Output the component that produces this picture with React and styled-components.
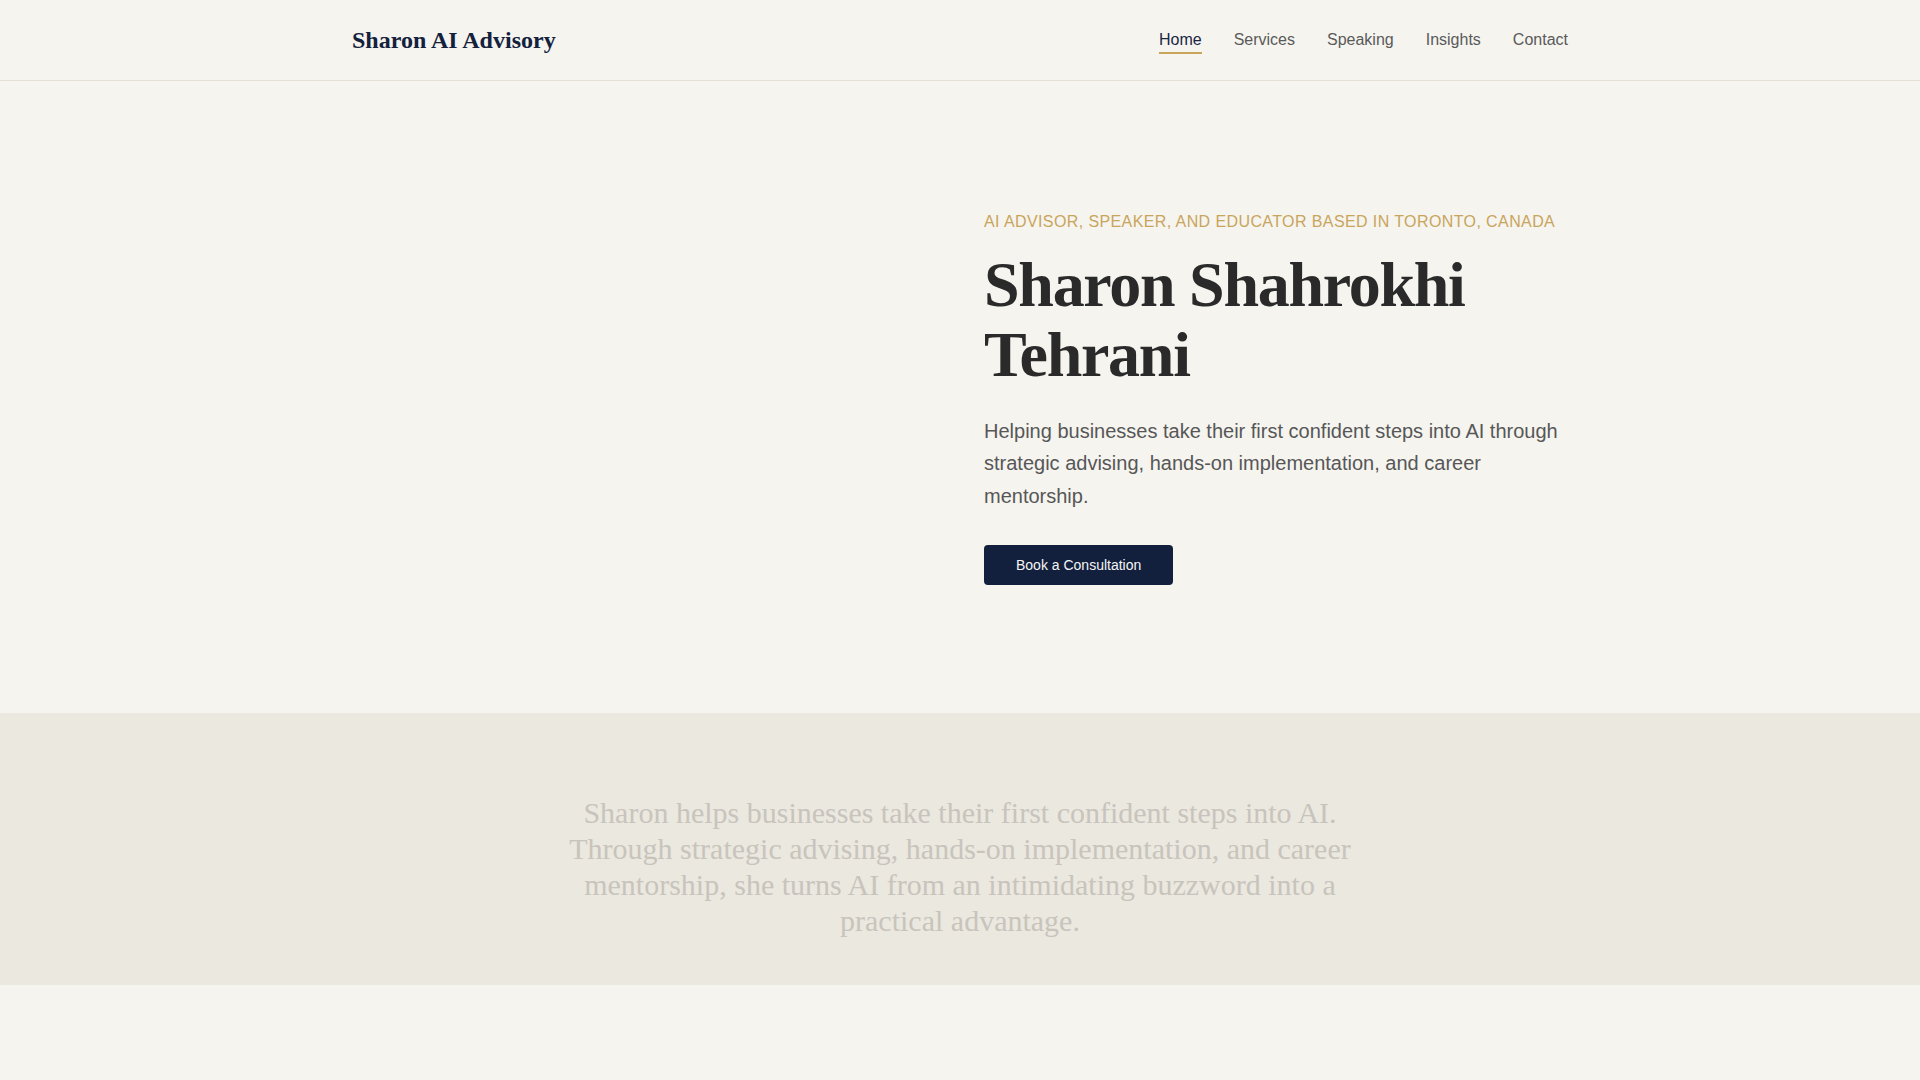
import styled, { createGlobalStyle } from "styled-components";

const GlobalStyle = createGlobalStyle`
	* { box-sizing: border-box; }
	body {
		margin: 0;
		background: #f5f4ef;
		font-family: "Liberation Sans", Arial, sans-serif;
		color: #2b2b2b;
	}
`;

const Header = styled.header`
	height: 81px;
	border-bottom: 1px solid #e5e0d5;
`;

const Container = styled.div`
	max-width: 1280px;
	margin: 0 auto;
	padding: 0 32px;
`;

const HeaderInner = styled(Container)`
	height: 80px;
	display: flex;
	align-items: center;
	justify-content: space-between;
`;

const Logo = styled.a`
	font-family: "Liberation Serif", "Times New Roman", serif;
	font-weight: 700;
	font-size: 24px;
	line-height: 1.5;
	color: #14213d;
	text-decoration: none;
`;

const Nav = styled.nav`
	display: flex;
	gap: 32px;
	align-items: center;
`;

const NavLink = styled.a`
	position: relative;
	display: block;
	font-size: 16px;
	line-height: 24px;
	padding-bottom: 1px;
	color: ${(p) => (p.$active ? "#1a2744" : "#5a5a5a")};
	text-decoration: none;
	&::after {
		content: "";
		position: absolute;
		left: 0;
		right: 0;
		bottom: -1px;
		height: 2px;
		background: ${(p) => (p.$active ? "#c9a55a" : "transparent")};
	}
`;

const Hero = styled.section`
	padding: 129px 0 128px;
`;

const HeroGrid = styled(Container)`
	display: grid;
	grid-template-columns: 1fr 1fr;
	gap: 48px;
	align-items: center;
`;

const Eyebrow = styled.p`
	margin: 0 0 16px;
	font-size: 16px;
	line-height: 24px;
	letter-spacing: 0.025em;
	text-transform: uppercase;
	color: #c9a55c;
`;

const Title = styled.h1`
	margin: 0 0 24px;
	font-family: "Liberation Serif", "Times New Roman", serif;
	font-weight: 700;
	font-size: 64px;
	line-height: 1.1;
	letter-spacing: -0.02em;
	color: #2a2a2a;
`;

const Lead = styled.p`
	margin: 0 0 33px;
	font-size: 20px;
	line-height: 1.625;
	color: #575757;
`;

const Button = styled.a`
	display: inline-flex;
	align-items: center;
	height: 40px;
	padding: 0 32px;
	border-radius: 4px;
	background: #12203d;
	color: #f5f5f5;
	font-size: 14px;
	text-decoration: none;
`;

const Intro = styled.section`
	background: #ebe8e0;
	padding: 82px 32px 46px;
`;

const IntroText = styled.p`
	max-width: 800px;
	margin: 0 auto;
	text-align: center;
	font-family: "Liberation Serif", "Times New Roman", serif;
	font-size: 30px;
	line-height: 1.2;
	color: #c8c4bc;
`;

const App = () => {
	const links = ["Home", "Services", "Speaking", "Insights", "Contact"];

	return (
		<>
			<GlobalStyle />
			<Header>
				<HeaderInner>
					<Logo href="#">Sharon AI Advisory</Logo>
					<Nav>
						{links.map((l) => (
							<NavLink key={l} href="#" $active={l === "Home"}>
								{l}
							</NavLink>
						))}
					</Nav>
				</HeaderInner>
			</Header>
			<Hero>
				<HeroGrid>
					<div />
					<div>
						<Eyebrow>AI Advisor, Speaker, and Educator based in Toronto, Canada</Eyebrow>
						<Title>Sharon Shahrokhi Tehrani</Title>
						<Lead>
							Helping businesses take their first confident steps into AI through strategic
							advising, hands-on implementation, and career mentorship.
						</Lead>
						<Button href="#">Book a Consultation</Button>
					</div>
				</HeroGrid>
			</Hero>
			<Intro>
				<IntroText>
					Sharon helps businesses take their first confident steps into AI. Through strategic
					advising, hands-on implementation, and career mentorship, she turns AI from an
					intimidating buzzword into a practical advantage.
				</IntroText>
			</Intro>
		</>
	);
};

export default App;
